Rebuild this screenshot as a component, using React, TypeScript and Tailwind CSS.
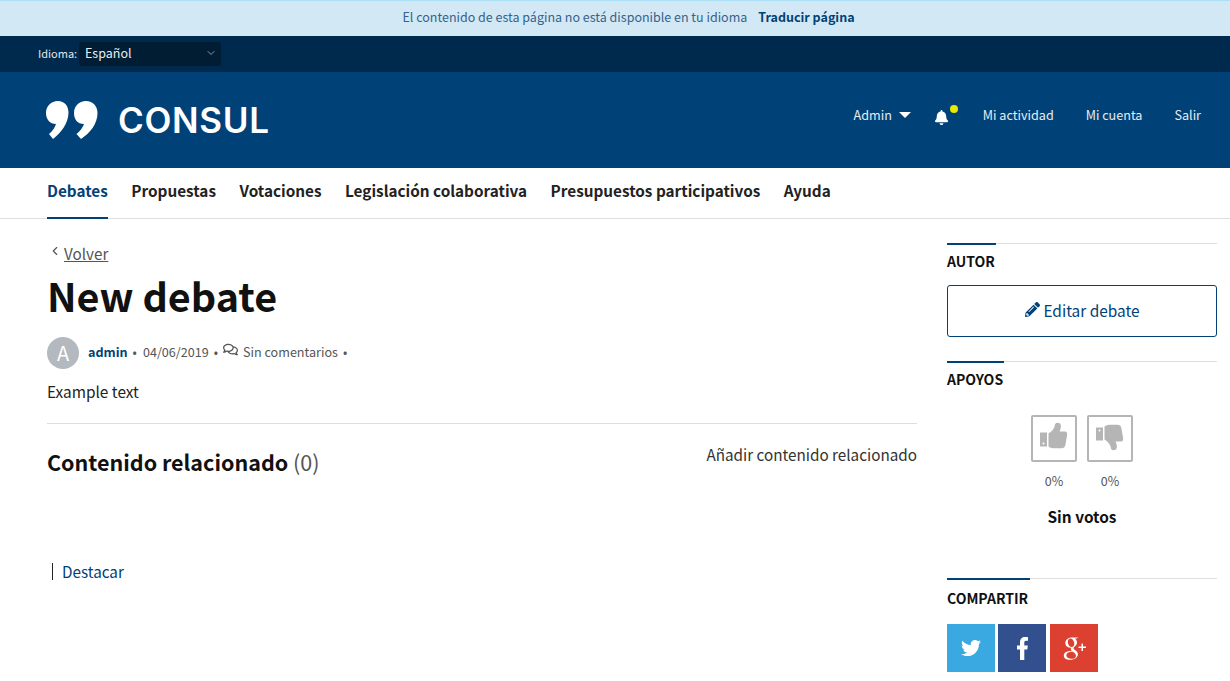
import { ChevronDown, ChevronLeft } from 'lucide-react'
import { FaBell, FaPencilAlt, FaRegComments, FaTwitter } from 'react-icons/fa'
import { TiSocialGooglePlus } from 'react-icons/ti'

const NAV_ITEMS = ['Propuestas', 'Votaciones', 'Legislación colaborativa', 'Presupuestos participativos', 'Ayuda']

function ThumbUp() {
  return (
    <svg viewBox="0 0 28 26" className="h-[26px] w-[28px] -translate-y-[3.5px] fill-[#b5b5b5]" aria-hidden>
      <path d="M0 10h7v14H0z" />
      <path d="M8.5 11C12 9 14.5 6 15 2c.5-2 3-2.200 5-1 1.500 1.500 1 5-.5 8H25c2 0 2.500 2 2 4l-1.500 9c-.5 2.500-2 4-4.500 4h-7c-2 0-4-1-5.500-2z" />
      <circle cx="3.500" cy="21" r="1" fill="#ffffff" />
    </svg>
  )
}

function ThumbDown() {
  return (
    <svg viewBox="0 0 28 26" className="h-[26px] w-[28px] -translate-y-[1.5px] fill-[#b5b5b5]" aria-hidden>
      <path d="M0 3h7v13H0z" />
      <path d="M8.5 15c3.500 2 6 5 6.500 9 .5 2 3 2.200 5 1 1.500-1.500 1-5-.5-8H25c2 0 2.500-2 2-4l-1.500-9C25 1.500 23.500 0 21 0h-7c-2 0-4 1-5.500 2z" />
      <circle cx="3.500" cy="6" r="1" fill="#ffffff" />
    </svg>
  )
}

function SideTitle({ title, barWidth, pad }: { title: string; barWidth: string; pad: string }) {
  return (
    <div className={`relative border-t border-[#dedede] ${pad}`}>
      <span className={`absolute -top-px left-0 h-[2px] bg-[#004278] ${barWidth}`} />
      <h2 className="text-[14px] font-bold uppercase leading-[20px] text-[#111]">{title}</h2>
    </div>
  )
}

export default function App() {
  return (
    <div className="h-[681px] overflow-hidden bg-white font-['Noto_Sans_CJK_JP',sans-serif] text-[#222]">
      {/* aviso de idioma */}
      <div className="flex h-[36px] items-center justify-center gap-[11px] border-t border-[#a9e0f5] bg-[#d3e8f5] pb-[3px] pl-[27px] text-[12.5px] text-[#33638c]">
        <span>El contenido de esta página no está disponible en tu idioma</span>
        <a className="font-bold text-[#004278]">Traducir página</a>
      </div>

      {/* selector de idioma */}
      <div className="flex h-[36px] items-center gap-[3px] bg-[#002a4d] pl-[38px] pb-[1px]">
        <span className="w-[38px] text-[11px] whitespace-nowrap text-[#e4e9ee]">Idioma:</span>
        <div className="flex h-[24px] w-[142px] items-center justify-between rounded-[3px] bg-[#001d33] pl-[6px] pr-[4px] pb-[1px] text-[12.5px] text-[#e8edf1]">
          Español
          <ChevronDown className="h-[12px] w-[12px] text-[#8b98a3]" />
        </div>
      </div>

      {/* cabecera */}
      <header className="flex h-[96px] items-center justify-between bg-[#004278] pl-[46px] pr-[29px] text-white">
        <div className="flex items-center gap-[20px]">
          <svg viewBox="0 0 52 38" className="h-[38px] w-[52px] fill-white" aria-hidden>
            <path d="M12 0c6.500 0 10.500 5 10.500 11.500C22.500 22 15 32 7 38l-4-5c3.500-3 6-6.500 7-10C4 23 0 18.500 0 12 0 5 5 0 12 0z" />
            <path d="M40 0c7 0 11.500 5 11.500 12C51.500 23 44 32 35 38l-4.500-5c3.500-3 6.500-6.500 7.500-10-6.500 0-10-4.500-10-11C28 5 33 0 40 0z" />
          </svg>
          <span className="font-['Inter',sans-serif] text-[35px] font-semibold leading-none tracking-[0.7px]">CONSUL</span>
        </div>
        <nav className="flex items-center pb-[10px] text-[12.6px] text-[#e6edf3]">
          <span>Admin</span>
          <span className="ml-[7px] h-0 w-0 border-x-[6px] border-t-[6px] border-x-transparent border-t-white" />
          <span className="relative ml-[23px] mr-[34px] pt-[5px]">
            <FaBell className="h-[15px] w-[15px] text-white" />
            <span className="absolute -right-[9px] top-0 h-[8px] w-[8px] rounded-full bg-[#e8e800]" />
          </span>
          <span>Mi actividad</span>
          <span className="ml-[32px]">Mi cuenta</span>
          <span className="ml-[32px]">Salir</span>
        </nav>
      </header>

      {/* menú principal */}
      <nav className="flex h-[51px] items-stretch gap-[23.5px] border-b border-[#dedede] pl-[47px] text-[15.3px] font-bold text-[#222]">
        <a className="-mb-px flex items-center border-b-[2px] border-[#004278] pb-[4px] text-[#004278]">Debates</a>
        {NAV_ITEMS.map(item => (
          <a key={item} className="flex items-center pb-[5px]">
            {item}
          </a>
        ))}
      </nav>

      <main className="flex justify-between pl-[47px] pr-[13px]">
        {/* debate */}
        <div className="w-[870px]">
          <a className="mt-[21px] flex items-center text-[15.25px] leading-[26px] text-[#555]">
            <ChevronLeft className="ml-[1px] mr-[2px] h-[14px] w-[14px] -translate-y-[2px]" />
            <span className="underline">Volver</span>
          </a>
          <h1 className="mt-[4px] text-[39.5px] font-bold leading-[50px] text-[#111]">New debate</h1>
          <div className="mt-[17px] flex items-center text-[12.6px] text-[#555]">
            <span className="flex h-[32px] w-[32px] items-center justify-center rounded-full bg-[#b3b9be] text-[20px] text-white">A</span>
            <div className="flex items-center pb-[2px]">
              <a className="ml-[9px] font-bold text-[#004278]">admin</a>
              <span className="ml-[5px] mr-[6px]">•</span>
              <span>04/06/2019</span>
              <span className="mx-[5px]">•</span>
              <FaRegComments className="mr-[5px] h-[15px] w-[15px] -translate-y-[2px]" />
              <span>Sin comentarios</span>
              <span className="mx-[5px]">•</span>
            </div>
          </div>
          <p className="mt-[10px] text-[15.4px] leading-[24px] text-[#222]">Example text</p>
          <hr className="mt-[20px] border-[#dedede]" />
          <div className="flex items-start justify-between pt-[18px]">
            <h2 className="-mt-[2px] text-[21.5px] font-bold leading-[44px] text-[#111]">
              Contenido relacionado <span className="font-normal text-[#555]">(0)</span>
            </h2>
            <a className="-mt-px text-[15.25px] leading-[26px] text-[#333]">Añadir contenido relacionado</a>
          </div>
          <div className="mt-[74px] flex items-center text-[15.25px] leading-[26px]">
            <span className="ml-[5px] mr-[9px] h-[17px] w-px bg-[#222]" />
            <a className="text-[#004278]">Destacar</a>
          </div>
        </div>

        {/* lateral */}
        <aside className="w-[270px] pt-[24px]">
          <SideTitle title="Autor" barWidth="w-[49px]" pad="pt-[7px]" />
          <a className="mt-[14px] flex h-[52px] items-center justify-center gap-[4px] rounded-[3px] border border-[#004278] pb-[1px] text-[15.4px] text-[#004278]">
            <FaPencilAlt className="h-[15px] w-[15px] translate-x-[1px] -translate-y-[1px]" />
            Editar debate
          </a>
          <div className="mt-[24px]">
            <SideTitle title="Apoyos" barWidth="w-[57px]" pad="pt-[7px]" />
          </div>
          <div className="mt-[26px] flex flex-col items-center">
            <div className="flex gap-[10px]">
              <div className="flex w-[46px] flex-col items-center">
                <div className="flex h-[47px] w-[46px] items-center justify-center rounded-[2px] border-2 border-[#b5b5b5]">
                  <ThumbUp />
                </div>
                <span className="mt-[10px] text-[12.5px] leading-[18px] text-[#555]">0%</span>
              </div>
              <div className="flex w-[46px] flex-col items-center">
                <div className="flex h-[47px] w-[46px] items-center justify-center rounded-[2px] border-2 border-[#b5b5b5]">
                  <ThumbDown />
                </div>
                <span className="mt-[10px] text-[12.5px] leading-[18px] text-[#555]">0%</span>
              </div>
            </div>
            <p className="mt-[14px] text-[15.4px] font-bold leading-[24px] text-[#111]">Sin votos</p>
          </div>
          <div className="mt-[50px]">
            <SideTitle title="Compartir" barWidth="w-[83px]" pad="pt-[9px]" />
          </div>
          <div className="mt-[16px] flex">
            <a className="flex h-[48px] w-[48px] items-center justify-center bg-[#3ba9e1] text-white">
              <FaTwitter className="h-[20px] w-[20px]" />
            </a>
            <a className="ml-[3px] flex h-[48px] w-[48px] items-center justify-center bg-[#32508e] text-white">
              <svg viewBox="0 0 11 23" className="h-[23px] w-[11px] fill-white" aria-hidden>
                <path d="M3 23V12.500H0V8.500h3V5.500C3 2 5 0 8 0c1.300 0 2.400.1 3 .2v3.600H9C7.700 3.800 7.300 4.500 7.300 5.700v2.800h3.500l-.5 4H7.300V23z" />
              </svg>
            </a>
            <a className="ml-[4px] flex h-[48px] w-[48px] items-center justify-center bg-[#dc4030] text-white">
              <TiSocialGooglePlus className="h-[36px] w-[36px]" />
            </a>
          </div>
        </aside>
      </main>
    </div>
  )
}
